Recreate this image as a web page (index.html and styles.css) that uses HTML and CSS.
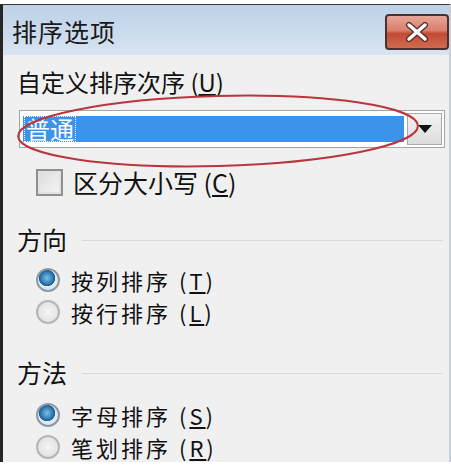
FILE: index.html
```html
<!DOCTYPE html>
<html lang="zh">
<head>
<meta charset="utf-8">
<title>排序选项</title>
<link rel="stylesheet" href="styles.css">
</head>
<body>
<div class="page">
  <div class="dialog">
    <div class="titlebar">
      <span class="title">排序选项</span>
      <span class="close">
        <svg width="30" height="20" viewBox="0 0 30 20"><path d="M7 3 L23 17 M23 3 L7 17" stroke="#5a2a22" stroke-width="6" stroke-linecap="round"/><path d="M7 3 L23 17 M23 3 L7 17" stroke="#ffffff" stroke-width="3.5" stroke-linecap="round"/></svg>
      </span>
    </div>
    <div class="content">
      <div class="label">自定义排序次序 (<u>U</u>)</div>
      <div class="combo">
        <div class="combo-field"><span class="sel-text">普通</span></div>
        <div class="combo-btn"><svg width="14" height="8" viewBox="0 0 14 8"><path d="M0 0 H14 L7 8 Z" fill="#111"/></svg></div>
      </div>
      <div class="check-row">
        <span class="checkbox"></span>
        <span class="opt">区分大小写 (<u>C</u>)</span>
      </div>
      <div class="group-head"><span class="gh-text">方向</span><span class="rule"></span></div>
      <div class="radio-row first"><span class="radio on"></span><span class="opt">按列排序 (<u>T</u>)</span></div>
      <div class="radio-row"><span class="radio"></span><span class="opt">按行排序 (<u>L</u>)</span></div>
      <div class="group-head second"><span class="gh-text">方法</span><span class="rule"></span></div>
      <div class="radio-row third"><span class="radio on"></span><span class="opt">字母排序 (<u>S</u>)</span></div>
      <div class="radio-row"><span class="radio"></span><span class="opt">笔划排序 (<u>R</u>)</span></div>
    </div>
    <svg class="ellipse" width="451" height="200" viewBox="0 0 451 200"><ellipse cx="218" cy="131" rx="200" ry="35" fill="none" stroke="#b8363c" stroke-width="2" transform="rotate(-1.5 218 131)"/></svg>
  </div>
</div>
</body>
</html>
```
FILE: styles.css
```css
* { box-sizing: border-box; }
html, body { margin: 0; padding: 0; background: #ffffff; }
body {
  width: 451px; height: 475px; overflow: hidden;
  font-family: "Noto Sans CJK SC", "Noto Sans", sans-serif;
  color: #111;
}
.page { padding-top: 4px; }
.dialog {
  position: relative;
  height: 458px;
  border-top: 1px solid #3a3a3a;
  border-left: 3px solid #262626;
  border-right: 2px solid #c9cfd6;
  background: #f0f0f0;
}
.titlebar {
  height: 50px;
  display: flex; align-items: center; justify-content: space-between;
  padding-left: 9px; padding-right: 0;
  background: linear-gradient(180deg, #bdd1e7 0%, #c9daec 50%, #d8e4f1 100%);
}
.title { font-size: 25px; line-height: 30px; color: #1a1a1a; letter-spacing: 1px; margin-top: 1px; }
.close {
  width: 64px; height: 36px; margin-top: 4px;
  border: 2px solid #4a3030; border-radius: 4px;
  background: linear-gradient(180deg, #e7a597 0%, #d9806d 45%, #c24b33 55%, #d16a52 100%);
  display: flex; align-items: center; justify-content: center;
}
.content { padding: 0 4px 0 14px; }
.label { margin-top: 11px; font-size: 24px; line-height: 32px; height: 32px; }
u { text-decoration: underline; text-underline-offset: 2px; }
.combo {
  margin-top: 12px; margin-left: 2px;
  height: 38px; display: flex;
  border: 1px solid #a4a4a4; background: #ffffff;
  padding: 2px;
}
.combo-field {
  flex: 1; margin: 3px 3px 3px 1px;
  background: #3b93ea;
  display: flex; align-items: center;
}
.sel-text {
  color: #ffffff; font-size: 24px; line-height: 26px;
  padding: 0 2px; margin-left: 1px;
  outline: 1px dotted #ffffff; outline-offset: -1px;
}
.combo-btn {
  width: 35px;
  border: 1px solid #a9a9a9;
  background: linear-gradient(180deg, #f3f3f3, #dcdcdc);
  display: flex; align-items: center; justify-content: center;
}
.check-row { margin-top: 21px; margin-left: 19px; display: flex; align-items: center; height: 26px; }
.checkbox {
  width: 27px; height: 27px; border: 2px solid #8f8f8f; background: linear-gradient(135deg, #dadada, #f6f6f6);
  box-shadow: inset 0 0 0 2px #e2e2e2;
}
.opt { display: block; margin-left: 10px; font-size: 25px; line-height: 30px; height: 30px; }
.radio-row .opt { font-size: 22px; letter-spacing: 3px; line-height: 32px; height: 32px; margin-left: 11px; }
.group-head { margin-top: 29px; display: flex; align-items: center; height: 30px; }
.gh-text { display: block; font-size: 25px; line-height: 30px; height: 30px; }
.rule { flex: 1; height: 1px; background: #d3d9de; margin-left: 15px; margin-right: 2px; margin-top: 2px; }
.radio-row { display: flex; align-items: center; margin-left: 19px; height: 32px; }
.radio-row.first { margin-top: 10px; }
.radio-row.third { margin-top: 12px; }
.radio {
  width: 24px; height: 24px; border-radius: 50%;
  border: 2px solid #b5b5b5;
  background: radial-gradient(circle, #f4f4f4 0%, #dcdcdc 100%);
}
.radio.on {
  border-color: #8c9aa6;
  background: radial-gradient(circle at 45% 40%, #7cc0e8 0%, #2b78b0 38%, #1d5a8a 48%, #e6ecf0 52%, #d2d8dc 100%);
}
.ellipse { position: absolute; left: -3px; top: -5px; pointer-events: none; }
```
